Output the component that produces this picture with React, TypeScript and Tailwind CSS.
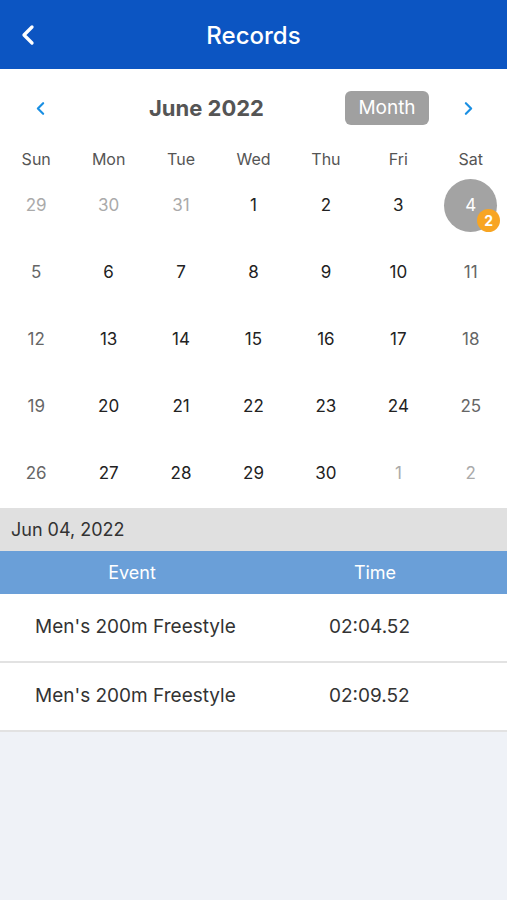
import { ChevronLeft, ChevronRight } from 'lucide-react'

type Day = { n: number; muted?: boolean }

const weekdays = ['Sun', 'Mon', 'Tue', 'Wed', 'Thu', 'Fri', 'Sat']

const weeks: Day[][] = [
  [{ n: 29, muted: true }, { n: 30, muted: true }, { n: 31, muted: true }, { n: 1 }, { n: 2 }, { n: 3 }, { n: 4 }],
  [{ n: 5 }, { n: 6 }, { n: 7 }, { n: 8 }, { n: 9 }, { n: 10 }, { n: 11 }],
  [{ n: 12 }, { n: 13 }, { n: 14 }, { n: 15 }, { n: 16 }, { n: 17 }, { n: 18 }],
  [{ n: 19 }, { n: 20 }, { n: 21 }, { n: 22 }, { n: 23 }, { n: 24 }, { n: 25 }],
  [{ n: 26 }, { n: 27 }, { n: 28 }, { n: 29 }, { n: 30 }, { n: 1, muted: true }, { n: 2, muted: true }],
]

const records = [
  { event: "Men's 200m Freestyle", time: '02:04.52' },
  { event: "Men's 200m Freestyle", time: '02:09.52' },
]

export default function App() {
  return (
    <div
      className="min-h-[900px] bg-[#eff2f7] flex flex-col"
      style={{ fontFamily: 'Inter, "Liberation Sans", sans-serif' }}
    >
      {/* Header */}
      <div className="h-[69px] bg-[#0c55c2] flex items-center relative">
        <ChevronLeft className="absolute left-[12px] w-[32px] h-[32px] text-white" strokeWidth={2.5} />
        <h1 className="flex-1 text-center text-white text-[24px] font-medium pt-[2px]">Records</h1>
      </div>

      {/* Calendar */}
      <div className="bg-white pb-[1px]">
        <div className="h-[78px] flex items-center relative">
          <ChevronLeft className="absolute left-[30px] w-[21px] h-[21px] text-[#1a8fe3]" strokeWidth={2.5} />
          <span className="absolute left-[149px] text-[22px] font-bold text-[#555] pt-[1px]">June 2022</span>
          <div className="absolute left-[345px] w-[84px] h-[34px] rounded-[6px] bg-[#a0a0a0] text-white text-[19px] flex items-center justify-center">
            Month
          </div>
          <ChevronRight className="absolute left-[458px] w-[21px] h-[21px] text-[#1a8fe3]" strokeWidth={2.5} />
        </div>
        <div className="grid grid-cols-7 h-[24px] items-center">
          {weekdays.map((d) => (
            <div key={d} className="text-center text-[16px] text-[#555]">
              {d}
            </div>
          ))}
        </div>
        {weeks.map((w, i) => (
          <div key={i} className={`grid grid-cols-7 h-[67px] items-center ${i === 0 ? 'mt-[1px]' : ''}`}>
            {w.map((d, j) => {
              const weekend = j === 0 || j === 6
              const selected = i === 0 && j === 6
              const color = d.muted ? 'text-[#aaa]' : weekend ? 'text-[#666]' : 'text-[#222]'
              return (
                <div key={j} className="flex justify-center">
                  {selected ? (
                    <div className="relative w-[53px] h-[53px] rounded-full bg-[#a3a3a3] flex items-center justify-center text-white text-[17px]">
                      4
                      <span className="absolute left-[33px] top-[30px] w-[23px] h-[23px] rounded-full bg-[#f8a523] text-white text-[14px] font-bold flex items-center justify-center">
                        2
                      </span>
                    </div>
                  ) : (
                    <span className={`text-[17px] ${color}`}>{d.n}</span>
                  )}
                </div>
              )
            })}
          </div>
        ))}
      </div>

      {/* Selected date */}
      <div className="h-[43px] bg-[#e0e0e0] flex items-center px-[11px] text-[18px] text-[#333]">
        Jun 04, 2022
      </div>

      {/* Table */}
      <div className="h-[43px] bg-[#6a9fd8] flex items-center text-white text-[18px]">
        <div className="w-[264px] text-center">Event</div>
        <div className="w-[222px] text-center">Time</div>
      </div>
      {records.map((r, i) => (
        <div key={i} className="h-[69px] bg-white border-b-[2px] border-[#e2e2e2] flex items-center text-[19px] text-[#333]">
          <div className="w-[329px] pl-[35px]">{r.event}</div>
          <div>{r.time}</div>
        </div>
      ))}
    </div>
  )
}
